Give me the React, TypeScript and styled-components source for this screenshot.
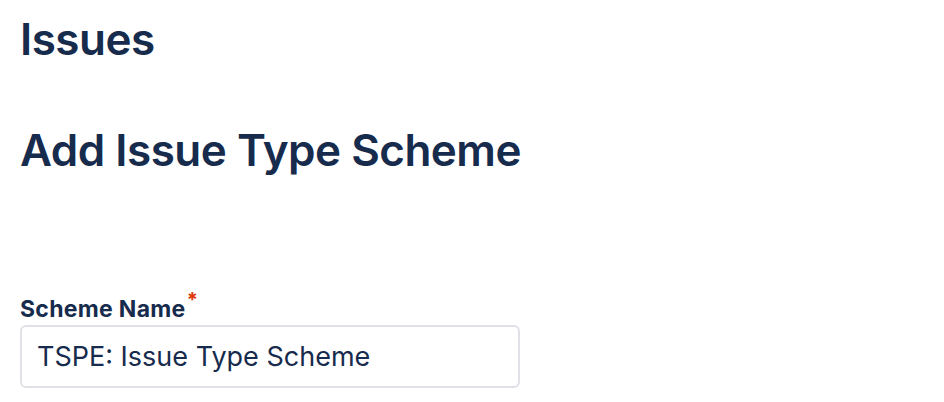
import styled, { createGlobalStyle } from "styled-components";

const GlobalStyle = createGlobalStyle`
    html, body {
        margin: 0;
        padding: 0;
        background: #ffffff;
        font-family: Inter, "Noto Sans", "Liberation Sans", sans-serif;
        color: #172b4d;
    }
`

export default function App() {
    return (
        <>
            <GlobalStyle />
            <Page>
                <PageTitle>Issues</PageTitle>
                <FormTitle>Add Issue Type Scheme</FormTitle>
                <Field>
                    <Label htmlFor="scheme-name">
                        Scheme Name<Required>*</Required>
                    </Label>
                    <TextInput id="scheme-name" defaultValue="TSPE: Issue Type Scheme" />
                </Field>
            </Page>
        </>
    )
}

const Page = styled.main`
    display: flex;
    flex-direction: column;
    padding: 14px 20px 0;
`

const PageTitle = styled.h1`
    margin: 0;
    font-size: 44px;
    font-weight: 600;
    line-height: 50px;
    letter-spacing: -0.5px;
`

const FormTitle = styled.h2`
    margin: 59px 0 0;
    font-size: 44px;
    font-weight: 600;
    line-height: 54px;
    letter-spacing: -0.5px;
`

const Field = styled.div`
    display: flex;
    flex-direction: column;
    margin-top: 119px;
    width: 500px;
`

const Label = styled.label`
    font-size: 23px;
    font-weight: 700;
    line-height: 26px;
    letter-spacing: 0.3px;
    margin-bottom: 3px;
`

const Required = styled.span`
    color: #de350b;
    font-size: 20px;
    vertical-align: top;
    position: relative;
    top: -9px;
    margin-left: 1px;
`

const TextInput = styled.input`
    box-sizing: border-box;
    height: 63px;
    width: 100%;
    padding: 0 15px;
    border: 2px solid #dfe1e6;
    border-radius: 6px;
    background: #ffffff;
    font-family: Inter, "Noto Sans", "Liberation Sans", sans-serif;
    font-size: 27px;
    color: #172b4d;
    outline: none;
`
